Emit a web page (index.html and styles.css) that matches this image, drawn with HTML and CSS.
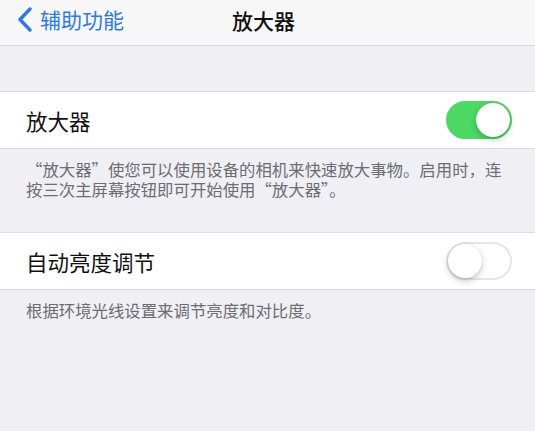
FILE: index.html
```html
<!DOCTYPE html>
<html lang="zh-CN">
<head>
  <meta charset="UTF-8" />
  <meta name="viewport" content="width=device-width, initial-scale=1.0" />
  <title>放大器</title>
  <link rel="stylesheet" href="styles.css">
</head>
<body>
  <div class="nav">
    <a class="back" href="#">
      <svg class="chev" width="16" height="25" viewBox="0 0 16 25"><path d="M13 2 L3 12.5 L13 23" fill="none" stroke="#2c7be5" stroke-width="3.4" stroke-linecap="round" stroke-linejoin="round"/></svg>
      <span>辅助功能</span>
    </a>
    <div class="title">放大器</div>
  </div>

  <div class="gap"></div>

  <div class="row">
    <span class="label">放大器</span>
    <span class="switch on"><span class="knob"></span></span>
  </div>
  <p class="note note-two">“放大器”使您可以使用设备的相机来快速放大事物。启用时，连按三次主屏幕按钮即可开始使用“放大器”。</p>

  <div class="row">
    <span class="label">自动亮度调节</span>
    <span class="switch"><span class="knob"></span></span>
  </div>
  <p class="note">根据环境光线设置来调节亮度和对比度。</p>
</body>
</html>
```

FILE: styles.css
```css
* { box-sizing: border-box; }
body {
  margin: 0;
  background: #efeff4;
  font-family: "Noto Sans CJK SC", "Noto Sans", sans-serif;
  color: #111;
}
.nav {
  height: 46px;
  background: #f7f7f7;
  border-bottom: 1px solid #d8d8dc;
  display: flex;
  align-items: center;
  justify-content: center;
  position: relative;
}
.back {
  position: absolute;
  left: 17px;
  top: 6px;
  display: flex;
  align-items: center;
  gap: 7px;
  color: #2c7be5;
  text-decoration: none;
  font-size: 21px;
  line-height: 26px;
}
.title {
  font-size: 21px;
  font-weight: 500;
  margin-left: -8px;
  margin-top: -5px;
}
.gap {
  height: 45px;
}
.row {
  height: 58px;
  background: #fff;
  border-top: 1px solid #dcdce0;
  border-bottom: 1px solid #dcdce0;
  display: flex;
  align-items: center;
  justify-content: space-between;
  padding: 0 23px 0 26px;
}
.label {
  font-size: 21.5px;
}
.switch {
  width: 66px;
  height: 38px;
  border-radius: 19px;
  background: #fff;
  border: 2px solid #e6e6e9;
  position: relative;
}
.switch .knob {
  position: absolute;
  top: 0;
  left: 0;
  width: 34px;
  height: 34px;
  border-radius: 50%;
  background: #fff;
  box-shadow: 0 3px 6px rgba(0,0,0,0.22), 0 0 1px rgba(0,0,0,0.2);
}
.switch.on {
  background: #4cd964;
  border-color: #4cd964;
}
.switch.on .knob {
  left: 28px;
}
.note {
  margin: 0;
  padding: 10px 28px 0 26px;
  font-size: 16.4px;
  line-height: 20px;
  color: #6d6d72;
  height: 43px;
}
.note-two {
  height: 83px;
}
```
